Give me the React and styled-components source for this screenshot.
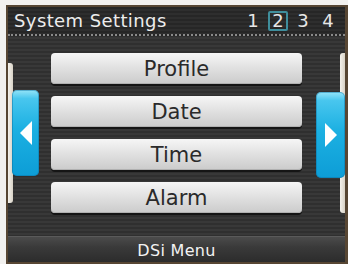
import React from "react";
import styled, { createGlobalStyle } from "styled-components";

const Global = createGlobalStyle`
  html, body { margin: 0; padding: 0; background: #f2f2f2; }
  body { font-family: "DejaVu Sans", "Liberation Sans", sans-serif; }
`;

const Page = styled.div`
  width: 348px;
  height: 264px;
  box-sizing: border-box;
  padding: 5px 0 0 6px;
  background: #f2f1ef;
  display: flex;
`;

const Frame = styled.div`
  flex: 1;
  display: flex;
  flex-direction: column;
  border-style: solid;
  border-color: #574633;
  border-width: 2px 3px 2px 2px;
  background: repeating-linear-gradient(
    to bottom,
    #2f2f2f 0px,
    #2f2f2f 2px,
    #383838 2px,
    #383838 4px
  );
`;

const Header = styled.div`
  height: 27px;
  display: flex;
  align-items: center;
  justify-content: space-between;
  padding: 0 7px 0 6px;
  border-bottom: 2px dotted #8a8a8a;
  background: repeating-linear-gradient(
    to bottom,
    #262626 0px,
    #262626 2px,
    #2e2e2e 2px,
    #2e2e2e 4px
  );
`;

const Title = styled.div`
  color: #ececec;
  font-size: 18px;
  letter-spacing: 0.4px;
  line-height: 1;
  margin-top: 1px;
`;

const Pages = styled.div`
  display: flex;
  align-items: center;
  gap: 5px;
`;

const PageNum = styled.div`
  width: 20px;
  height: 20px;
  box-sizing: border-box;
  display: flex;
  align-items: center;
  justify-content: center;
  color: #e6e6e6;
  font-size: 18px;
  line-height: 1;
  border: 2px solid ${(p) => (p.$active ? "#3f8e9c" : "transparent")};
  border-radius: 2px;
`;

const Main = styled.div`
  flex: 1;
  display: flex;
  justify-content: space-between;
`;

const Side = styled.div`
  position: relative;
  width: 32px;
  display: flex;
  flex-direction: column;
  align-items: ${(p) => (p.$right ? "flex-end" : "flex-start")};
`;

const Rail = styled.div`
  width: 5px;
  height: ${(p) => p.$h}px;
  margin-top: ${(p) => p.$top}px;
  background: linear-gradient(to right, #f4f2ec, #d8d2c6);
  border-radius: ${(p) => (p.$right ? "3px 0 0 3px" : "0 3px 3px 0")};
`;

const Tab = styled.div`
  position: absolute;
  top: ${(p) => p.$top}px;
  ${(p) => (p.$right ? "right: 0;" : "left: 4px;")}
  width: ${(p) => (p.$right ? 29 : 27)}px;
  height: 86px;
  box-sizing: border-box;
  border-radius: 5px;
  background: linear-gradient(
    to bottom,
    #96e4f8 0%,
    #48c6ee 10%,
    #1cb0e2 45%,
    #0d9dd6 100%
  );
  box-shadow: inset 0 0 0 1px rgba(10, 110, 160, 0.45);
  display: flex;
  align-items: center;
  justify-content: center;
`;

const List = styled.div`
  width: 251px;
  margin: 17px 0 0 0;
  display: flex;
  flex-direction: column;
  gap: 12px;
`;

const Button = styled.div`
  height: 31px;
  box-sizing: border-box;
  border-radius: 4px;
  background: linear-gradient(
    to bottom,
    #f6f6f6 0%,
    #e2e2e2 45%,
    #cbcbcb 100%
  );
  box-shadow: 0 2px 0 #151515, inset 0 -1px 0 #b0b0b0;
  display: flex;
  align-items: center;
  justify-content: center;
  color: #2a2a2a;
  font-size: 21px;
  line-height: 1;
  padding-top: 2px;
`;

const Footer = styled.div`
  height: 26px;
  display: flex;
  align-items: center;
  justify-content: center;
  color: #f2f2f2;
  font-size: 16px;
  letter-spacing: 0.3px;
  padding-top: 1px;
  box-sizing: border-box;
  border-top: 1px solid #5a5a5a;
  background: linear-gradient(to bottom, #4b4b4b 0%, #3a3a3a 40%, #2c2c2c 100%);
`;

const Arrow = ({ right }) => (
  <svg width="14" height="24" viewBox="0 0 14 24">
    {right ? (
      <polygon points="1,0 13,12 1,24" fill="#ffffff" />
    ) : (
      <polygon points="13,0 1,12 13,24" fill="#ffffff" />
    )}
  </svg>
);

export default function App() {
  return (
    <>
      <Global />
      <Page>
        <Frame>
          <Header>
            <Title>System Settings</Title>
            <Pages>
              <PageNum>1</PageNum>
              <PageNum $active>2</PageNum>
              <PageNum>3</PageNum>
              <PageNum>4</PageNum>
            </Pages>
          </Header>
          <Main>
            <Side>
              <Rail $top={27} $h={140} />
              <Tab $top={54}>
                <Arrow />
              </Tab>
            </Side>
            <List>
              <Button>Profile</Button>
              <Button>Date</Button>
              <Button>Time</Button>
              <Button>Alarm</Button>
            </List>
            <Side $right>
              <Rail $right $top={17} $h={160} />
              <Tab $right $top={56}>
                <Arrow right />
              </Tab>
            </Side>
          </Main>
          <Footer>DSi Menu</Footer>
        </Frame>
      </Page>
    </>
  );
}
